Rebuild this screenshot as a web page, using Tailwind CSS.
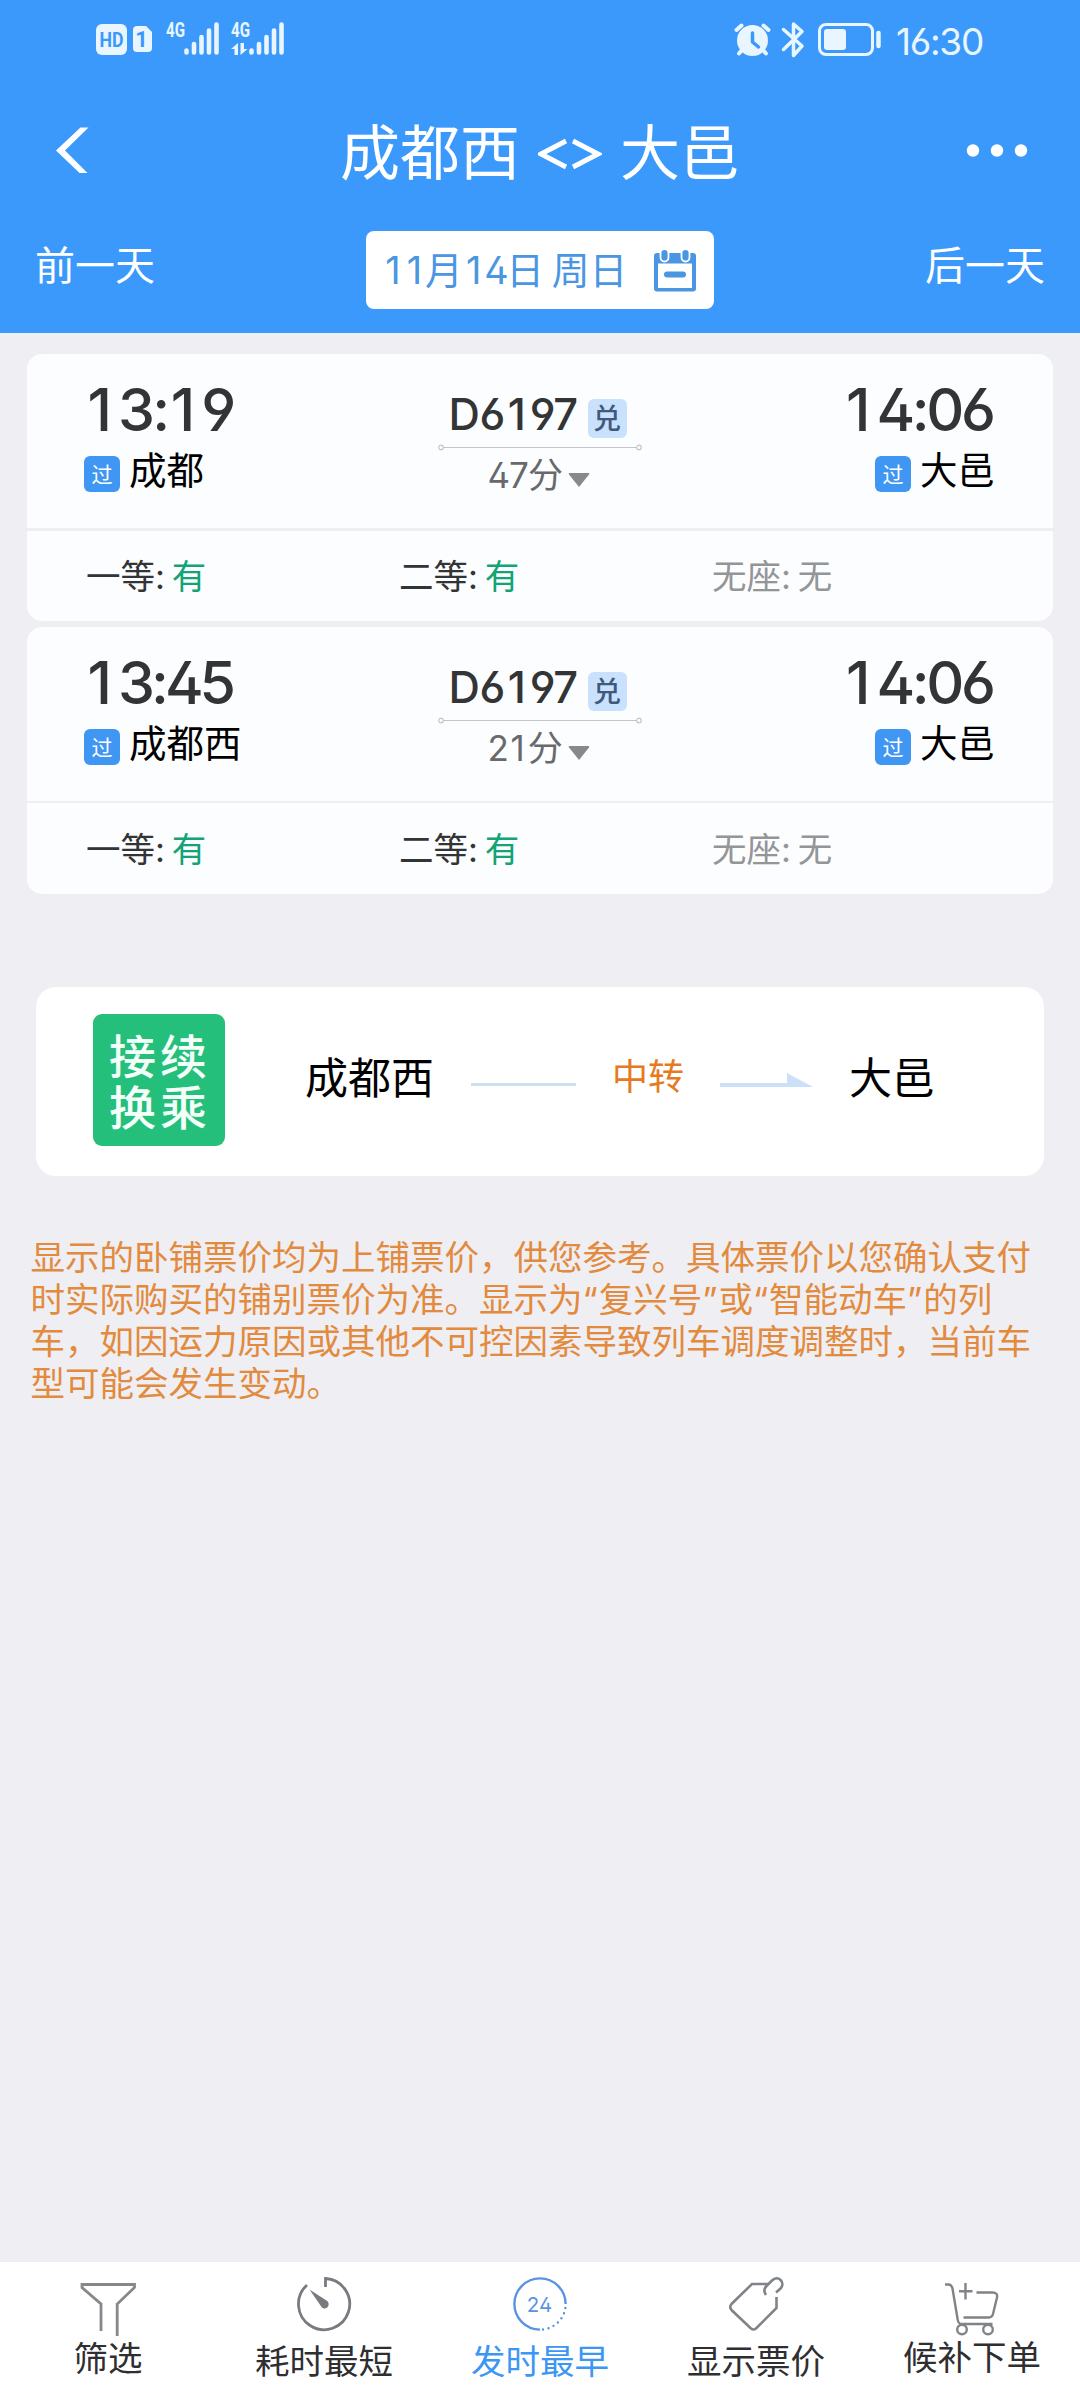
<!DOCTYPE html>
<html lang="zh-CN">
<head>
<meta charset="utf-8">
<title>成都西 - 大邑</title>
<script src="https://cdn.jsdelivr.net/npm/@tailwindcss/browser@4"></script>
</head>
<body class="flex h-[2400px] w-[1080px] flex-col overflow-hidden bg-[#efeef3] font-['Inter','Noto_Sans_CJK_SC',sans-serif] whitespace-nowrap [font-feature-settings:'cv02','cv03','cv04']">

<header class="h-[333px] shrink-0 bg-[#3b99fc] text-white">
  <!-- status bar -->
  <div class="flex h-20 justify-between pr-[96px] pl-[96px] text-[#e9f6ff]">
    <svg width="190" height="80" viewBox="96 0 190 80" fill="currentColor">
      <rect x="96" y="24" width="31" height="31" rx="6"/>
      <text x="111.500" y="47" text-anchor="middle" font-size="20" font-weight="700" textLength="24" lengthAdjust="spacingAndGlyphs" fill="#3b99fc" font-family="Roboto">HD</text>
      <path d="M137 26h9l6 6v16a4 4 0 0 1-4 4h-11a4 4 0 0 1-4-4V30a4 4 0 0 1 4-4z"/>
      <text x="141.500" y="47" text-anchor="middle" font-size="22" font-weight="700" fill="#3b99fc" font-family="Roboto">1</text>
      <text x="166" y="37" font-size="21" font-weight="700" textLength="19" lengthAdjust="spacingAndGlyphs" font-family="Roboto">4G</text>
      <text x="231" y="37" font-size="21" font-weight="700" textLength="19" lengthAdjust="spacingAndGlyphs" font-family="Roboto">4G</text>
      <g stroke="currentColor" stroke-width="4.600" stroke-linecap="round">
        <path d="M186.500 50.500v2M194 44v8.500M201.500 37v15.500M209 30.500v22M216.500 24.500v28"/>
        <path d="M251.500 50.500v2M259 44v8.500M266.500 37v15.500M274 30.500v22M281.500 24.500v28"/>
      </g>
      <path d="M238 43v12h-3.500v-6H231zM240.500 43h3.500v6h3.500l-7 6z"/>
    </svg>
    <div class="flex">
      <svg width="150" height="80" viewBox="734 0 150 80" fill="none" stroke="currentColor" stroke-linecap="round" stroke-linejoin="round">
        <circle cx="752.500" cy="40.500" r="15.500" fill="currentColor" stroke="none"/>
        <path d="M736.500 30l5-4.500M763.500 25.500l5 4.500M742 50l-3 3.500M763 50l3 3.500" stroke-width="4"/>
        <path d="M752.500 33v9l6 5" stroke="#3b99fc" stroke-width="3.500"/>
        <path d="M783.500 29.500l18.500 16.500-8.500 9.500V24l8.500 7.500-18.500 18" stroke-width="3.500"/>
        <rect x="819.500" y="24.500" width="53" height="30" rx="6.500" stroke-width="3"/>
        <rect x="824" y="29" width="22" height="21" rx="3" fill="currentColor" stroke="none"/>
        <path d="M878.500 33v13" stroke-width="4.500"/>
      </svg>
      <div class="mt-[22px] ml-[12px] h-10 w-[88px] text-[37px] leading-10 tracking-[-1.300px]">16:30</div>
    </div>
  </div>
  <!-- title -->
  <div class="flex h-[140px] items-center pr-[52px] pl-[56px]">
    <svg class="w-[34px]" height="48" viewBox="0 0 34 48" fill="currentColor"><path d="M24.500 1.500h8L9 24.500l22.500 22.500h-8L0 24.500z"/></svg>
    <h1 class="ml-[250px] flex w-[404px] pt-[5px] text-[60px] leading-[72px]">
      <span>成都西</span><svg class="mr-[18px] ml-[18px] mt-[7px]" width="64" height="60" viewBox="0 0 64 60" fill="none" stroke="currentColor" stroke-width="4.800"><path d="M28 17L3 30l25 13M35 17l25 13-25 13"/></svg><span>大邑</span>
    </h1>
    <svg class="ml-auto" width="62" height="14" viewBox="0 0 62 14" fill="currentColor"><circle cx="7" cy="7.500" r="6.200"/><circle cx="31" cy="7.500" r="6.200"/><circle cx="55" cy="7.500" r="6.200"/></svg>
  </div>
  <!-- date switcher -->
  <div class="flex justify-between px-[35px] pt-[11px] text-[40px] leading-[70px]">
    <span class="w-[200px]">前一天</span>
    <div class="flex h-[78px] w-[348px] items-center rounded-lg bg-white pl-[16px] text-[37.800px] text-[#4b96e2]">
      <span class="w-[247px] [word-spacing:-3px]"><span class="inline-block w-[21.500px] pr-[3px] text-right">1</span><span class="inline-block w-[21.500px] pr-[3px] text-right">1</span>月<span class="inline-block w-[21.500px] pr-[3px] text-right">1</span><span class="tracking-[-2.500px]">4</span>日 周日</span>
      <svg class="ml-[25px]" width="42" height="43" viewBox="0 0 42 43" fill="currentColor">
        <path fill-rule="evenodd" d="M3 4h36a3 3 0 0 1 3 3v32.500a3 3 0 0 1-3 3H3a3 3 0 0 1-3-3V7a3 3 0 0 1 3-3zM4 14.500V39h34V14.500z"/>
        <g stroke="#fff" stroke-width="1.800"><rect x="6.500" y="0" width="8" height="12.500" rx="4"/><rect x="27.500" y="0" width="8" height="12.500" rx="4"/></g>
        <rect x="10" y="22.500" width="22" height="6" rx="3"/>
      </svg>
    </div>
    <span class="w-[200px] text-right">后一天</span>
  </div>
</header>

<main class="flex-1 pt-[21px]">
  <!-- train list -->
  <section class="mx-[27px] flex flex-col gap-1.5">

    <article class="h-[267px] rounded-[15px] bg-[#fcfdff]">
      <div class="flex h-[174px] justify-between pr-[58px] pl-[57px]">
        <div class="w-[200px] pt-[26px]">
          <div class="text-[59px] leading-[60px] font-medium tracking-[-2.800px] text-[#333436]"><span class="inline-block w-[34px] pr-[6px] text-right tracking-normal">1</span>3:<span class="inline-block w-[34px] pr-[6px] text-right tracking-normal">1</span>9</div>
          <div class="flex gap-[9px] pt-[9px] text-[37.500px] leading-[44px] text-black"><span class="mt-[7px] size-9 rounded-[6px] bg-[#4096f3] text-center text-[21px] leading-[38px] text-white">过</span>成都</div>
        </div>
        <div class="w-[204px] pt-[37px]">
          <div class="flex h-[53px] pl-[11px]"><span class="w-[139px] text-[43.500px] leading-[46px] tracking-[-0.500px] font-medium text-[#333436]">D6<span class="inline-block w-[25px] pr-[4px] text-right tracking-normal">1</span>97</span><span class="mt-2 h-[39px] w-[39px] rounded-[6px] bg-[#c9e1fd] text-center text-[28px] leading-[40px] font-medium text-[#405a7d]">兑</span></div>
          <svg width="204" height="8" viewBox="0 0 204 8" fill="none" stroke="#c4c5c8" stroke-width="1.200"><circle cx="3" cy="3.500" r="2.300"/><path d="M5.300 3.500h193.400"/><circle cx="201" cy="3.500" r="2.300"/></svg>
          <div class="flex h-11 pl-[50px] text-[35px] leading-[46px] text-[#68696c]"><span class="w-20"><span class="tracking-[-1px]">47</span>分</span><svg class="mt-[21px]" width="22" height="14" viewBox="0 0 22 14" fill="#88898b"><path d="M1.500 0h19q1.500 0 .5 1.500L11 14 1 1.500Q0 0 1.500 0z"/></svg></div>
        </div>
        <div class="flex w-[200px] flex-col items-end pt-[26px]">
          <div class="pr-[2.500px] text-[59px] leading-[60px] font-medium tracking-[-3.400px] text-[#333436]"><span class="inline-block w-[33px] pr-[6px] text-right tracking-normal">1</span>4:06</div>
          <div class="flex gap-[9px] pt-[9px] text-[37.500px] leading-[44px] text-black"><span class="mt-[7px] size-9 rounded-[6px] bg-[#4096f3] text-center text-[21px] leading-[38px] text-white">过</span>大邑</div>
        </div>
      </div>
      <div class="grid h-[93px] grid-cols-[313px_313px_1fr] border-t-3 border-[#eeeff2] pl-[59px] text-[34.500px] leading-[92px] [word-spacing:-3px] text-[#333436]">
        <span>一等: <span class="text-[#13a476]">有</span></span><span>二等: <span class="text-[#13a476]">有</span></span><span class="text-[#949597]">无座: 无</span>
      </div>
    </article>

    <article class="h-[267px] rounded-[15px] bg-[#fcfdff]">
      <div class="flex h-[174px] justify-between pr-[58px] pl-[57px]">
        <div class="w-[200px] pt-[26px]">
          <div class="text-[59px] leading-[60px] font-medium tracking-[-4px] text-[#333436]"><span class="inline-block w-[34px] pr-[6px] text-right tracking-normal">1</span>3:45</div>
          <div class="flex gap-[9px] pt-[9px] text-[37.500px] leading-[44px] text-black"><span class="mt-[7px] size-9 rounded-[6px] bg-[#4096f3] text-center text-[21px] leading-[38px] text-white">过</span>成都西</div>
        </div>
        <div class="w-[204px] pt-[37px]">
          <div class="flex h-[53px] pl-[11px]"><span class="w-[139px] text-[43.500px] leading-[46px] tracking-[-0.500px] font-medium text-[#333436]">D6<span class="inline-block w-[25px] pr-[4px] text-right tracking-normal">1</span>97</span><span class="mt-2 h-[39px] w-[39px] rounded-[6px] bg-[#c9e1fd] text-center text-[28px] leading-[40px] font-medium text-[#405a7d]">兑</span></div>
          <svg width="204" height="8" viewBox="0 0 204 8" fill="none" stroke="#c4c5c8" stroke-width="1.200"><circle cx="3" cy="3.500" r="2.300"/><path d="M5.300 3.500h193.400"/><circle cx="201" cy="3.500" r="2.300"/></svg>
          <div class="flex h-11 pl-[50px] text-[35px] leading-[46px] text-[#68696c]"><span class="w-20"><span class="tracking-[-1px]">2</span><span class="inline-block w-[20px] pr-[3px] text-right">1</span>分</span><svg class="mt-[21px]" width="22" height="14" viewBox="0 0 22 14" fill="#88898b"><path d="M1.500 0h19q1.500 0 .5 1.500L11 14 1 1.500Q0 0 1.500 0z"/></svg></div>
        </div>
        <div class="flex w-[200px] flex-col items-end pt-[26px]">
          <div class="pr-[2.500px] text-[59px] leading-[60px] font-medium tracking-[-3.400px] text-[#333436]"><span class="inline-block w-[33px] pr-[6px] text-right tracking-normal">1</span>4:06</div>
          <div class="flex gap-[9px] pt-[9px] text-[37.500px] leading-[44px] text-black"><span class="mt-[7px] size-9 rounded-[6px] bg-[#4096f3] text-center text-[21px] leading-[38px] text-white">过</span>大邑</div>
        </div>
      </div>
      <div class="grid h-[93px] grid-cols-[313px_313px_1fr] border-t-2 border-[#eeeff2] pl-[59px] text-[34.500px] leading-[94px] [word-spacing:-3px] text-[#333436]">
        <span>一等: <span class="text-[#13a476]">有</span></span><span>二等: <span class="text-[#13a476]">有</span></span><span class="text-[#949597]">无座: 无</span>
      </div>
    </article>
  </section>

  <!-- transfer -->
  <section class="mx-[36px] mt-[93px] flex h-[189px] rounded-[20px] bg-white pt-[27px] pl-[57px] text-[43px] leading-[128px] text-black">
    <div class="h-[132px] w-[132px] rounded-[9px] bg-[#24bf7a] pt-[17px] pl-[16px] text-[47px] leading-[51px] font-medium tracking-[4px] text-[#f4fffa]">接续<br>换乘</div>
    <span class="ml-[80px] w-[166px]">成都西</span>
    <span class="mt-[69px] h-[3px] w-[105px] bg-[#cfdff2]"></span>
    <span class="ml-[36px] w-[108px] text-[36px] leading-[126px] text-[#e67a22]">中转</span>
    <svg class="mt-[57px]" width="94" height="16" viewBox="0 0 94 16" fill="#cbe0f9"><path d="M0 12h67V2l26 14H0z"/></svg>
    <span class="ml-[35px]">大邑</span>
  </section>

  <p class="mt-[61px] ml-[30.500px] text-[34.500px] leading-[42px] text-[#e28a3d]">显示的卧铺票价均为上铺票价，供您参考。具体票价以您确认支付<br>时实际购买的铺别票价为准。显示为<span class="tracking-[1px]">“</span>复兴号<span class="tracking-[1px]">”</span>或<span class="tracking-[1px]">“</span>智能动车<span class="tracking-[1px]">”</span>的列<br>车，如因运力原因或其他不可控因素导致列车调度调整时，当前车<br>型可能会发生变动。</p>
</main>

<!-- tab bar -->
<nav class="grid h-[138px] shrink-0 grid-cols-5 bg-white text-center text-[34.500px] leading-[40px] text-[#2f2f31]">
  <div class="flex flex-col items-center pt-[15px]">
    <svg width="60" height="60" viewBox="78 2277 60 60" fill="none" stroke="#85898c" stroke-width="2.800"><path d="M101 2331v-27l-19-16.500v-3h52.500v3l-17.300 16.500v32"/></svg>
    <span class="mt-[2px]">筛选</span>
  </div>
  <div class="flex flex-col items-center pt-[15px]">
    <svg width="60" height="60" viewBox="294 2277 60 60" fill="none" stroke="#777b7f" stroke-width="2.800"><path d="M325.500 2287v-8.500a25.600 25.600 0 1 1-18.500 6.500"/><path d="M309.500 2289.500l17 11a4.200 4.200 0 1 1-6 5z" fill="#777b7f" stroke="none"/></svg>
    <span class="mt-[5px]">耗时最短</span>
  </div>
  <div class="flex flex-col items-center pt-[15px] text-[#3b97f3]">
    <svg width="60" height="60" viewBox="510 2277 60 60" fill="none" stroke="#5a93e6" stroke-width="2.400"><path d="M565.600 2304a25.600 25.600 0 1 0-25.600 25.600"/><path d="M565.400 2308a25.600 25.600 0 0 1-25.400 21.600" stroke-linecap="round" stroke-dasharray="0 5.500"/><text x="539.500" y="2311.500" text-anchor="middle" font-size="20.500" font-weight="400" fill="#5a93e6" stroke="none" font-family="Inter">24</text></svg>
    <span class="mt-[5px]">发时最早</span>
  </div>
  <div class="flex flex-col items-center pt-[15px]">
    <svg width="60" height="60" viewBox="726 2277 60 60" fill="none" stroke="#808488" stroke-width="2.600"><path d="M768 2284h-16l-20.500 20q-2.500 3 0 6l19.500 18.500q2.500 2 5 0l20.500-20.500v-11M766 2295q-3.500-5 .5-9l5.500-5.500c6-6 14 2 8.500 8l-4.500 4"/></svg>
    <span class="mt-[5px]">显示票价</span>
  </div>
  <div class="flex flex-col items-center pt-[15px]">
    <svg width="60" height="60" viewBox="942 2277 60 60" fill="none" stroke="#808488" stroke-width="2.400"><path d="M945 2284.500h3.500q3 0 4 4l5 30q.5 5.500 4 5.500h31M976.500 2292.500h16q5.500 0 4.500 5l-4 16.500q-1 3.500-4 3.500h-25.500M965.500 2283v16.500M959 2291.300h13.500"/><circle cx="962" cy="2329.500" r="4.800"/><circle cx="988" cy="2329.500" r="4.800"/></svg>
    <span class="mt-[1px]">候补下单</span>
  </div>
</nav>
</body>
</html>
